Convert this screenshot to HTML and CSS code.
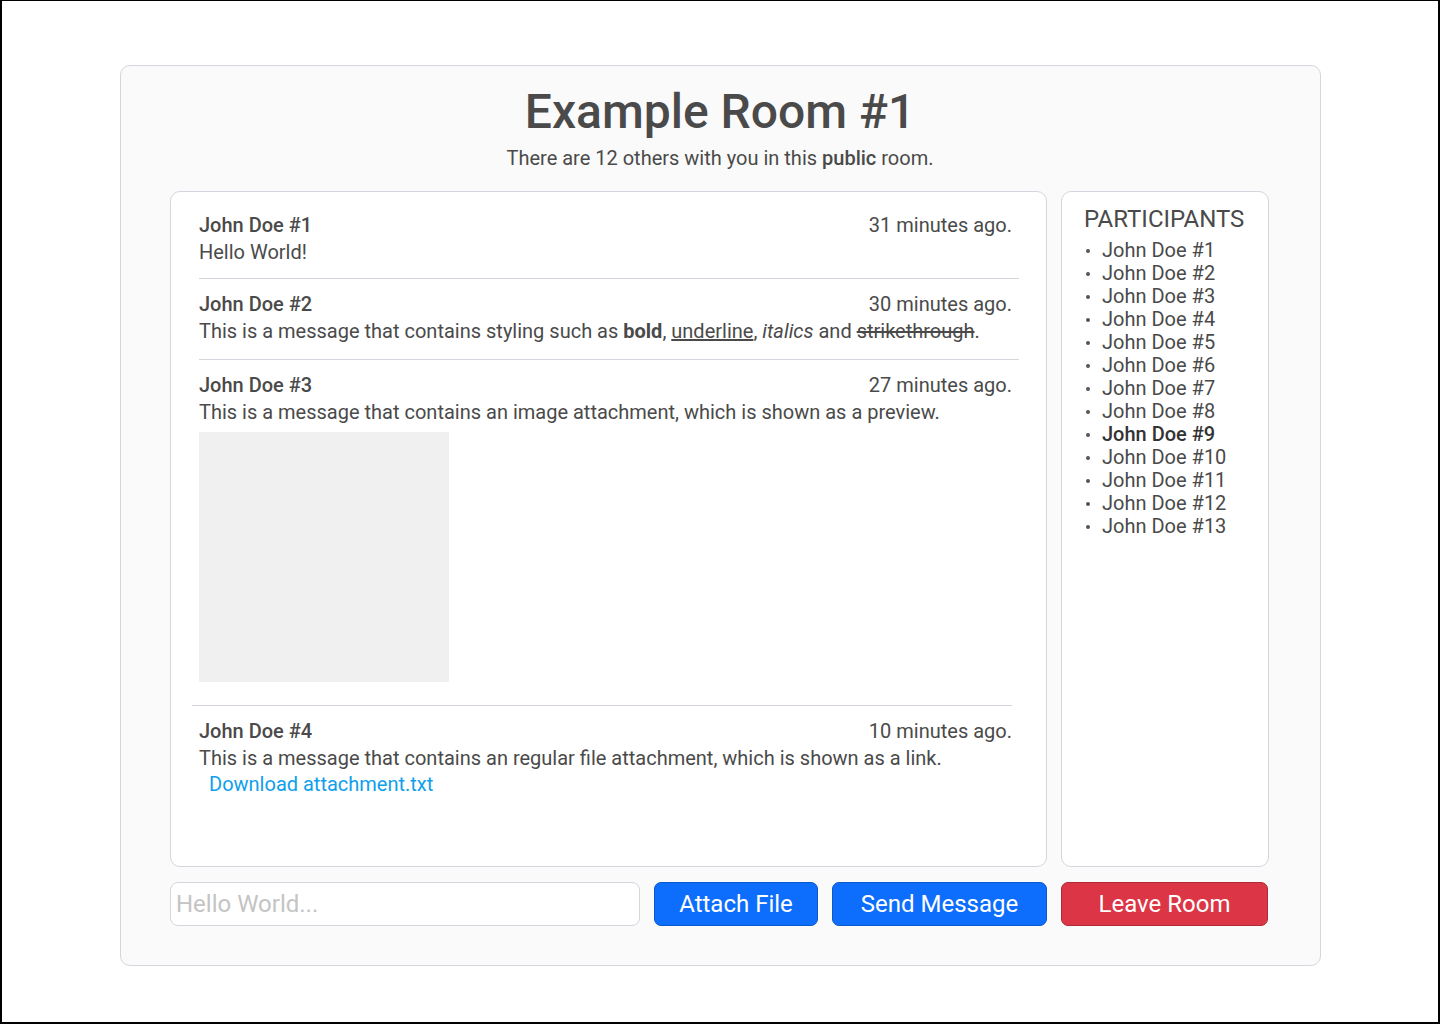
FILE: index.html
```html
<!DOCTYPE html>
<html lang="en">
<head>
<meta charset="utf-8">
<title>Example Room #1</title>
<link rel="stylesheet" href="styles.css">
</head>
<body>
<div class="frame">
  <main class="room">
    <header class="room-head">
      <h1 class="room-title">Example Room #1</h1>
      <p class="room-sub">There are 12 others with you in this <strong>public</strong> room.</p>
    </header>
    <section class="room-body">
      <div class="chat">
        <article class="msg msg-a">
          <div class="msg-head"><span class="msg-name">John Doe #1</span><span class="msg-time">31 minutes ago.</span></div>
          <p class="msg-text">Hello World!</p>
        </article>
        <article class="msg msg-b">
          <div class="msg-head"><span class="msg-name">John Doe #2</span><span class="msg-time">30 minutes ago.</span></div>
          <p class="msg-text">This is a message that contains styling such as <strong>bold</strong>, <u>underline</u>, <em>italics</em> and <s>strikethrough</s>.</p>
        </article>
        <article class="msg msg-c">
          <div class="msg-head"><span class="msg-name">John Doe #3</span><span class="msg-time">27 minutes ago.</span></div>
          <p class="msg-text">This is a message that contains an image attachment, which is shown as a preview.</p>
          <div class="msg-image"></div>
        </article>
        <article class="msg msg-d">
          <div class="msg-head"><span class="msg-name">John Doe #4</span><span class="msg-time">10 minutes ago.</span></div>
          <p class="msg-text">This is a message that contains an regular file attachment, which is shown as a link.</p>
          <a class="msg-link" href="#">Download attachment.txt</a>
        </article>
      </div>
      <aside class="people">
        <h2 class="people-title">PARTICIPANTS</h2>
        <ul class="people-list">
          <li>John Doe #1</li>
          <li>John Doe #2</li>
          <li>John Doe #3</li>
          <li>John Doe #4</li>
          <li>John Doe #5</li>
          <li>John Doe #6</li>
          <li>John Doe #7</li>
          <li>John Doe #8</li>
          <li class="me">John Doe #9</li>
          <li>John Doe #10</li>
          <li>John Doe #11</li>
          <li>John Doe #12</li>
          <li>John Doe #13</li>
        </ul>
      </aside>
    </section>
    <footer class="room-foot">
      <div class="compose">
        <input class="compose-input" type="text" placeholder="Hello World...">
        <button class="btn btn-blue btn-attach" type="button">Attach File</button>
        <button class="btn btn-blue btn-send" type="button">Send Message</button>
      </div>
      <button class="btn btn-red" type="button">Leave Room</button>
    </footer>
  </main>
</div>
</body>
</html>
```
FILE: styles.css
```css
* { box-sizing: border-box; }
html, body { margin: 0; padding: 0; }
body {
  background: #fff;
  font-family: Roboto, "Liberation Sans", Arial, sans-serif;
  color: #4a4a4a;
}
.frame {
  width: 1440px;
  height: 1024px;
  border-top: 1px solid #000;
  border-left: 2px solid #000;
  border-right: 2px solid #000;
  border-bottom: 2px solid #000;
  padding-top: 64px;
}
.room {
  width: 1201px;
  height: 901px;
  margin-left: 118px;
  background: #fafafa;
  border: 1px solid #d3d6dc;
  border-radius: 10px;
  padding: 18px 50px 39px 49px;
  display: flex;
  flex-direction: column;
}
.room-head { text-align: center; }
.room-title {
  margin: 0;
  font-size: 48px;
  line-height: 56px;
  font-weight: 500;
  color: #4a4a4a;
}
.room-sub {
  margin: 6px 0 21px;
  font-size: 20px;
  line-height: 24px;
}
.room-sub strong { font-weight: 500; }

.room-body {
  flex: 1;
  display: grid;
  grid-template-columns: 877px 208px;
  column-gap: 14px;
  min-height: 0;
}
.chat {
  background: #fff;
  border: 1px solid #d3d6dc;
  border-radius: 10px;
  padding-top: 20px;
  overflow: hidden;
}
.msg {
  margin-left: 28px;
  width: 820px;
  padding: 12px 7px 12px 0;
  border-bottom: 1px solid #d3d6dc;
}
.msg-a { padding-top: 0; }
.msg-b { padding-bottom: 14px; }
.msg-c {
  margin-left: 21px;
  width: 820px;
  padding-left: 7px;
  padding-right: 0;
  padding-bottom: 23px;
}
.msg-d { border-bottom: none; }
.msg-head {
  display: flex;
  justify-content: space-between;
  font-size: 20px;
  line-height: 27px;
}
.msg-name { font-weight: 500; }
.msg-text {
  margin: 0;
  font-size: 20px;
  line-height: 27px;
}
.msg-text strong { font-weight: 700; }
.msg-image {
  margin-top: 6px;
  width: 250px;
  height: 250px;
  background: #f0f0f0;
}
.msg-link {
  display: block;
  margin-left: 10px;
  font-size: 20px;
  line-height: 25px;
  color: #0ea0ec;
  text-decoration: none;
}

.people {
  background: #fff;
  border: 1px solid #d3d6dc;
  border-radius: 10px;
  padding: 13px 10px 0 22px;
}
.people-title {
  margin: 0 0 6px;
  font-size: 24px;
  line-height: 28px;
  font-weight: 400;
  color: #4a4a4a;
}
.people-list {
  list-style: none;
  margin: 0;
  padding: 0;
}
.people-list li {
  display: flex;
  align-items: center;
  font-size: 20px;
  line-height: 23px;
}
.people-list li::before {
  content: "";
  width: 4px;
  height: 4px;
  border-radius: 50%;
  background: #555;
  margin: 0 12px 0 2px;
}
.people-list li.me { font-weight: 500; color: #333; }

.room-foot {
  margin-top: 15px;
  display: grid;
  grid-template-columns: 877px 208px;
  column-gap: 14px;
  height: 44px;
}
.compose {
  display: flex;
  gap: 14px;
}
.compose-input {
  width: 470px;
  height: 44px;
  border: 1px solid #d3d6dc;
  border-radius: 8px;
  background: #fff;
  font-family: Roboto, "Liberation Sans", Arial, sans-serif;
  font-size: 24px;
  padding: 0 5px;
  color: #4a4a4a;
  outline: none;
}
.compose-input::placeholder { color: #c4c4c4; }
.btn {
  height: 44px;
  border-radius: 7px;
  font-family: Roboto, "Liberation Sans", Arial, sans-serif;
  font-size: 24px;
  color: #fff;
  padding: 0;
  cursor: pointer;
}
.btn-blue { background: #0d6efd; border: 1px solid #0a58ca; }
.btn-attach { width: 164px; }
.btn-send { width: 215px; }
.btn-red { background: #dc3545; border: 1px solid #b02a37; width: 207px; }
```
